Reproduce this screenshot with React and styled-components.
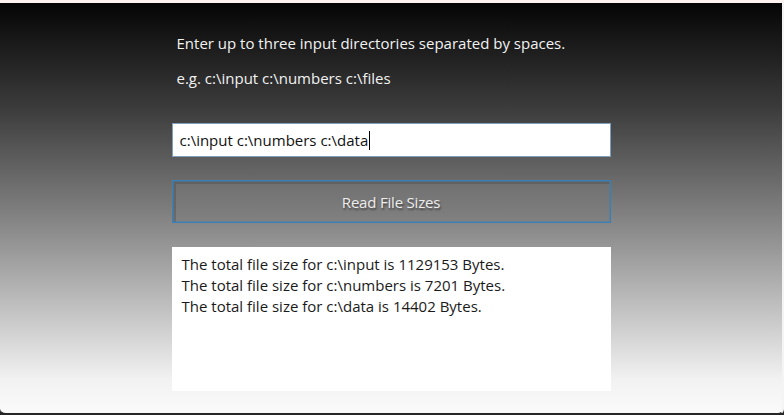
import React from 'react';
import styled, { createGlobalStyle } from 'styled-components';

const GlobalStyle = createGlobalStyle`
  html, body {
    margin: 0;
    padding: 0;
    background: #262626;
  }
`;

const Frame = styled.div`
  width: 784px;
  height: 415px;
  box-sizing: border-box;
  border-top: 3px solid #fdf2f0;
  border-right: 2px solid #f4f4f4;
  border-bottom: 2px solid #262626;
  border-radius: 0 0 6px 6px;
  background: linear-gradient(to bottom, #050505 0%, #3a3a3a 25%, #8a8a8a 55%, #f2f2f2 92%, #fafafa 100%);
  font-family: 'Open Sans', 'Noto Sans', sans-serif;
  display: flex;
  justify-content: center;
  overflow: hidden;
`;

const Column = styled.div`
  width: 439px;
  display: flex;
  flex-direction: column;
  padding-top: 30px;
`;

const Prompt = styled.p`
  margin: 0 0 ${p => p.gap || 0}px 5px;
  color: #f2f2f2;
  font-size: 15px;
  line-height: 20px;
`;

const PathInput = styled.div`
  margin-top: 35px;
  height: 34px;
  box-sizing: border-box;
  background: #fff;
  border: 1px solid #7f9dbd;
  padding: 0 7px;
  display: flex;
  align-items: center;
  font-size: 15px;
  color: #111;
`;

const Caret = styled.span`
  display: inline-block;
  width: 1px;
  height: 19px;
  background: #000;
  margin-left: 1px;
`;

const ReadButton = styled.button`
  margin-top: 23px;
  height: 43px;
  box-sizing: border-box;
  background: rgba(120, 120, 120, 0.35);
  border: 1px solid #3d7fb3;
  box-shadow: inset 0 0 0 1px rgba(60, 127, 179, 0.5), inset 2px 2px 0 1px rgba(70, 70, 70, 0.35);
  color: #ececec;
  font-family: 'Open Sans', 'Noto Sans', sans-serif;
  font-size: 15px;
  letter-spacing: -0.2px;
  text-shadow: 1px 2px 2px rgba(0, 0, 0, 0.45);
  cursor: pointer;
`;

const Output = styled.div`
  margin-top: 24px;
  height: 144px;
  box-sizing: border-box;
  background: #fff;
  padding: 7px 10px;
  color: #1a1a1a;
  font-size: 15px;
  line-height: 21px;
`;

const results = [
  'The total file size for c:\\input is 1129153 Bytes.',
  'The total file size for c:\\numbers is 7201 Bytes.',
  'The total file size for c:\\data is 14402 Bytes.',
];

export default function App() {
  return (
    <>
      <GlobalStyle />
      <Frame>
        <Column>
          <Prompt gap={15}>Enter up to three input directories separated by spaces.</Prompt>
          <Prompt>e.g. c:\input c:\numbers c:\files</Prompt>
          <PathInput>
            c:\input c:\numbers c:\data
            <Caret />
          </PathInput>
          <ReadButton>Read File Sizes</ReadButton>
          <Output>
            {results.map(line => (
              <div key={line}>{line}</div>
            ))}
          </Output>
        </Column>
      </Frame>
    </>
  );
}
